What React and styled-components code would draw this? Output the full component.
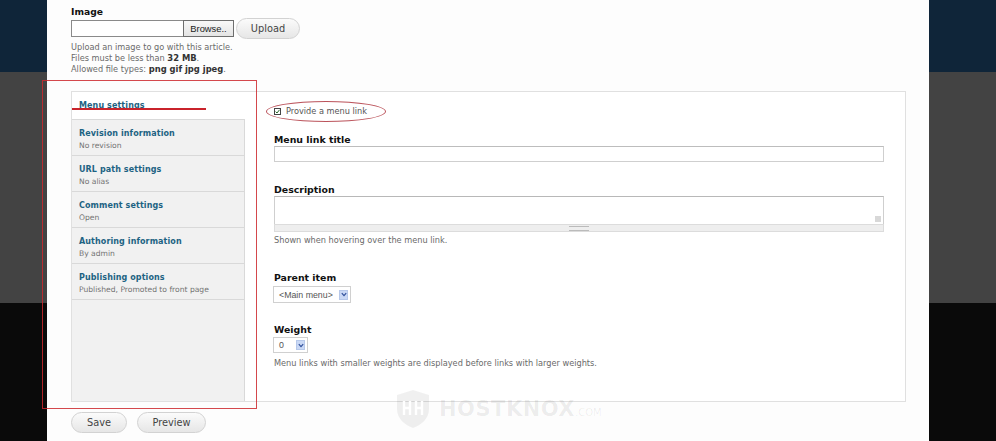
import React from 'react';
import styled, { createGlobalStyle } from 'styled-components';

const GlobalStyle = createGlobalStyle`
  html, body {
    margin: 0;
    padding: 0;
  }
  body {
    font-family: "DejaVu Sans", Verdana, sans-serif;
    background: #0b0b0b;
  }
`;

const Page = styled.div`
  position: relative;
  width: 996px;
  height: 441px;
  overflow: hidden;
  background: linear-gradient(
    to bottom,
    #0f2539 0,
    #0f2539 72px,
    #434343 72px,
    #434343 303px,
    #0a0a0a 303px
  );
`;

const Sheet = styled.div`
  position: relative;
  margin-left: 47px;
  width: 882px;
  height: 441px;
  box-sizing: border-box;
  background: #fdfdfd;
  padding: 5px 0 0 24px;
  display: flex;
  flex-direction: column;
`;

const FieldLabel = styled.div`
  font-size: 9.2px;
  font-weight: bold;
  line-height: 13px;
  color: #111;
`;

const FileRow = styled.div`
  display: flex;
  align-items: center;
  height: 21px;
`;

const FileBox = styled.div`
  width: 112px;
  height: 17px;
  box-sizing: border-box;
  border: 1px solid #8a8a8a;
  border-right: none;
  background: #fff;
`;

const BrowseButton = styled.div`
  width: 51px;
  height: 17px;
  box-sizing: border-box;
  border: 1px solid #6e6e6e;
  background: linear-gradient(#f8f8f8, #e4e4e4);
  font-family: "Liberation Sans", Arial, sans-serif;
  font-size: 9.4px;
  line-height: 15px;
  text-align: center;
  color: #222;
`;

const PillButton = styled.div`
  width: ${p => p.$w}px;
  height: 21px;
  box-sizing: border-box;
  margin-left: ${p => p.$ml || 0}px;
  border: 1px solid #d2d2d2;
  border-radius: 11px;
  background: linear-gradient(#fbfbfb, #e6e6e6);
  font-size: 9.8px;
  line-height: 19px;
  text-align: center;
  color: #444;
`;

const HelpText = styled.div`
  font-size: 8.2px;
  line-height: ${p => p.$lh || 11}px;
  color: #6a6a6a;
  margin-top: ${p => p.$mt || 0}px;

  b {
    font-weight: bold;
    color: #333;
    font-size: 8.4px;
  }
`;

const HelpBlock = styled.div`
  margin-top: 3px;
`;

const VerticalTabs = styled.div`
  margin-top: 16px;
  width: 835px;
  height: 311px;
  box-sizing: border-box;
  border: 1px solid #e0e0e0;
  display: flex;
  background: #fff;
`;

const TabList = styled.div`
  width: 173px;
  flex: none;
  display: flex;
  flex-direction: column;
  background: #f1f1f1;
`;

const Tab = styled.div`
  box-sizing: border-box;
  height: ${p => (p.$selected ? 28 : 36)}px;
  padding: ${p => (p.$selected ? 7.5 : 7.5)}px 0 0 7px;
  border-bottom: 1px solid #d9d9d9;
  border-right: ${p => (p.$selected ? 'none' : '1px solid #d9d9d9')};
  background: ${p => (p.$selected ? '#fff' : '#f1f1f1')};
`;

const TabFill = styled.div`
  flex: 1;
  border-right: 1px solid #d9d9d9;
`;

const TabTitle = styled.div`
  font-size: 8px;
  font-weight: bold;
  line-height: 12px;
  color: #1d6383;
  letter-spacing: 0.1px;
`;

const TabSummary = styled.div`
  font-size: 7.6px;
  line-height: 11px;
  color: #737373;
`;

const Pane = styled.div`
  flex: 1;
  padding: 13px 20px 0 29px;
  display: flex;
  flex-direction: column;
`;

const CheckRow = styled.div`
  display: flex;
  align-items: center;
  height: 12px;
  font-size: 8.2px;
  color: #555;
  gap: 5px;
`;

const CheckBox = styled.div`
  width: 7px;
  height: 7px;
  box-sizing: border-box;
  border: 1px solid #444;
  background: #fff;
  display: flex;
  align-items: center;
  justify-content: center;
`;

const PaneLabel = styled(FieldLabel)`
  line-height: 12px;
  font-size: 9.4px;
  margin-top: ${p => p.$mt}px;
`;

const TextInput = styled.div`
  width: 610px;
  height: 16px;
  box-sizing: border-box;
  border: 1px solid #cfcfcf;
  border-top-color: #bdbdbd;
  background: #fff;
`;

const TextArea = styled.div`
  position: relative;
  width: 610px;
  height: 28px;
  box-sizing: border-box;
  border: 1px solid #cfcfcf;
  border-top-color: #b8b8b8;
  border-bottom: none;
  background: #fff;
`;

const ResizeDots = styled.div`
  position: absolute;
  right: 2px;
  bottom: 2px;
  width: 6px;
  height: 6px;
  background-image: radial-gradient(#aaa 0.6px, transparent 0.8px);
  background-size: 2px 2px;
`;

const Grippie = styled.div`
  width: 610px;
  height: 8px;
  box-sizing: border-box;
  border: 1px solid #dcdcdc;
  background: #eeeeee;
  display: flex;
  align-items: center;
  justify-content: center;

  &::after {
    content: '';
    width: 20px;
    height: 3px;
    border-top: 1px solid #bbb;
    border-bottom: 1px solid #bbb;
  }
`;

const Select = styled.div`
  width: ${p => p.$w}px;
  height: ${p => p.$h}px;
  margin-top: ${p => p.$mt}px;
  margin-left: -1px;
  box-sizing: border-box;
  border: 1px solid #d0d0d0;
  background: #fff;
  display: flex;
  align-items: center;
  justify-content: space-between;
  padding: 0 2px 0 5px;
  font-family: "Liberation Sans", Arial, sans-serif;
  font-size: 8.8px;
  color: #555;
`;

const SelectArrow = styled.div`
  width: 9px;
  height: 10px;
  background: #c9d8f5;
  border: 1px solid #b6c8ea;
  box-sizing: border-box;
  display: flex;
  align-items: center;
  justify-content: center;
`;

const Actions = styled.div`
  display: flex;
  margin-top: 10px;
`;

const Annotation = styled.div`
  position: absolute;
  left: ${p => p.$x}px;
  top: ${p => p.$y}px;
  width: ${p => p.$w}px;
  height: ${p => p.$h}px;
  box-sizing: border-box;
  pointer-events: none;
`;

const RedFrame = styled(Annotation)`
  border: 1px solid rgba(205, 40, 45, 0.85);
`;

const RedOval = styled(Annotation)`
  border: 1px solid rgba(170, 40, 50, 0.8);
  border-radius: 50%;
`;

const RedLine = styled(Annotation)`
  background: #c9232b;
`;

const Watermark = styled.div`
  position: absolute;
  left: 395px;
  top: 389px;
  display: flex;
  align-items: center;
  gap: 8px;
  color: rgba(0, 0, 0, 0.07);
  pointer-events: none;
`;

const WatermarkName = styled.span`
  font-family: "DejaVu Sans", sans-serif;
  font-weight: bold;
  font-size: 21px;
  letter-spacing: 0.5px;

  small {
    font-size: 10px;
    font-weight: normal;
    letter-spacing: 0;
  }
`;

const Arrow = () => (
  <svg width="6" height="5" viewBox="0 0 6 5">
    <path d="M0.8 1.2 L3 3.6 L5.2 1.2" fill="none" stroke="#2f4f9a" strokeWidth="1.2" />
  </svg>
);

const tabs = [
  { title: 'Revision information', summary: 'No revision' },
  { title: 'URL path settings', summary: 'No alias' },
  { title: 'Comment settings', summary: 'Open' },
  { title: 'Authoring information', summary: 'By admin' },
  { title: 'Publishing options', summary: 'Published, Promoted to front page' },
];

export default function App() {
  return (
    <Page>
      <GlobalStyle />
      <Sheet>
        <FieldLabel>Image</FieldLabel>
        <FileRow>
          <FileBox />
          <BrowseButton>Browse..</BrowseButton>
          <PillButton $w={64} $ml={2}>Upload</PillButton>
        </FileRow>
        <HelpBlock>
          <HelpText>Upload an image to go with this article.</HelpText>
          <HelpText>Files must be less than <b>32 MB</b>.</HelpText>
          <HelpText>Allowed file types: <b>png gif jpg jpeg</b>.</HelpText>
        </HelpBlock>

        <VerticalTabs>
          <TabList>
            <Tab $selected>
              <TabTitle>Menu settings</TabTitle>
            </Tab>
            {tabs.map(t => (
              <Tab key={t.title}>
                <TabTitle>{t.title}</TabTitle>
                <TabSummary>{t.summary}</TabSummary>
              </Tab>
            ))}
            <TabFill />
          </TabList>

          <Pane>
            <CheckRow>
              <CheckBox>
                <svg width="5" height="5" viewBox="0 0 5 5">
                  <path d="M0.6 2.6 L2 4 L4.5 0.8" fill="none" stroke="#2a6a2a" strokeWidth="1" />
                </svg>
              </CheckBox>
              Provide a menu link
            </CheckRow>

            <PaneLabel $mt={17}>Menu link title</PaneLabel>
            <TextInput />

            <PaneLabel $mt={22}>Description</PaneLabel>
            <TextArea>
              <ResizeDots />
            </TextArea>
            <Grippie />
            <HelpText $mt={3}>Shown when hovering over the menu link.</HelpText>

            <PaneLabel $mt={26}>Parent item</PaneLabel>
            <Select $w={78} $h={17} $mt={2}>
              &lt;Main menu&gt;
              <SelectArrow><Arrow /></SelectArrow>
            </Select>

            <PaneLabel $mt={21}>Weight</PaneLabel>
            <Select $w={35} $h={16} $mt={1}>
              0
              <SelectArrow><Arrow /></SelectArrow>
            </Select>
            <HelpText $mt={5}>
              Menu links with smaller weights are displayed before links with larger weights.
            </HelpText>
          </Pane>
        </VerticalTabs>

        <Actions>
          <PillButton $w={56}>Save</PillButton>
          <PillButton $w={69} $ml={10}>Preview</PillButton>
        </Actions>
      </Sheet>

      <Watermark>
        <svg width="36" height="40" viewBox="0 0 36 40">
          <path
            d="M18 1 L34 6 L34 20 C34 30 26 36 18 39 C10 36 2 30 2 20 L2 6 Z"
            fill="rgba(0,0,0,0.06)"
          />
          <path d="M9 12 V26 M9 19 H15 M15 12 V26 M21 12 V26 M21 19 H27 M27 12 V26" stroke="#fff" strokeWidth="2.4" fill="none" />
        </svg>
        <WatermarkName>HOSTKNOX<small>.COM</small></WatermarkName>
      </Watermark>

      <RedFrame $x={42} $y={80} $w={215} $h={329} />
      <RedLine $x={72} $y={108} $w={134} $h={2} />
      <RedOval $x={266} $y={101} $w={120} $h={21} />
    </Page>
  );
}
